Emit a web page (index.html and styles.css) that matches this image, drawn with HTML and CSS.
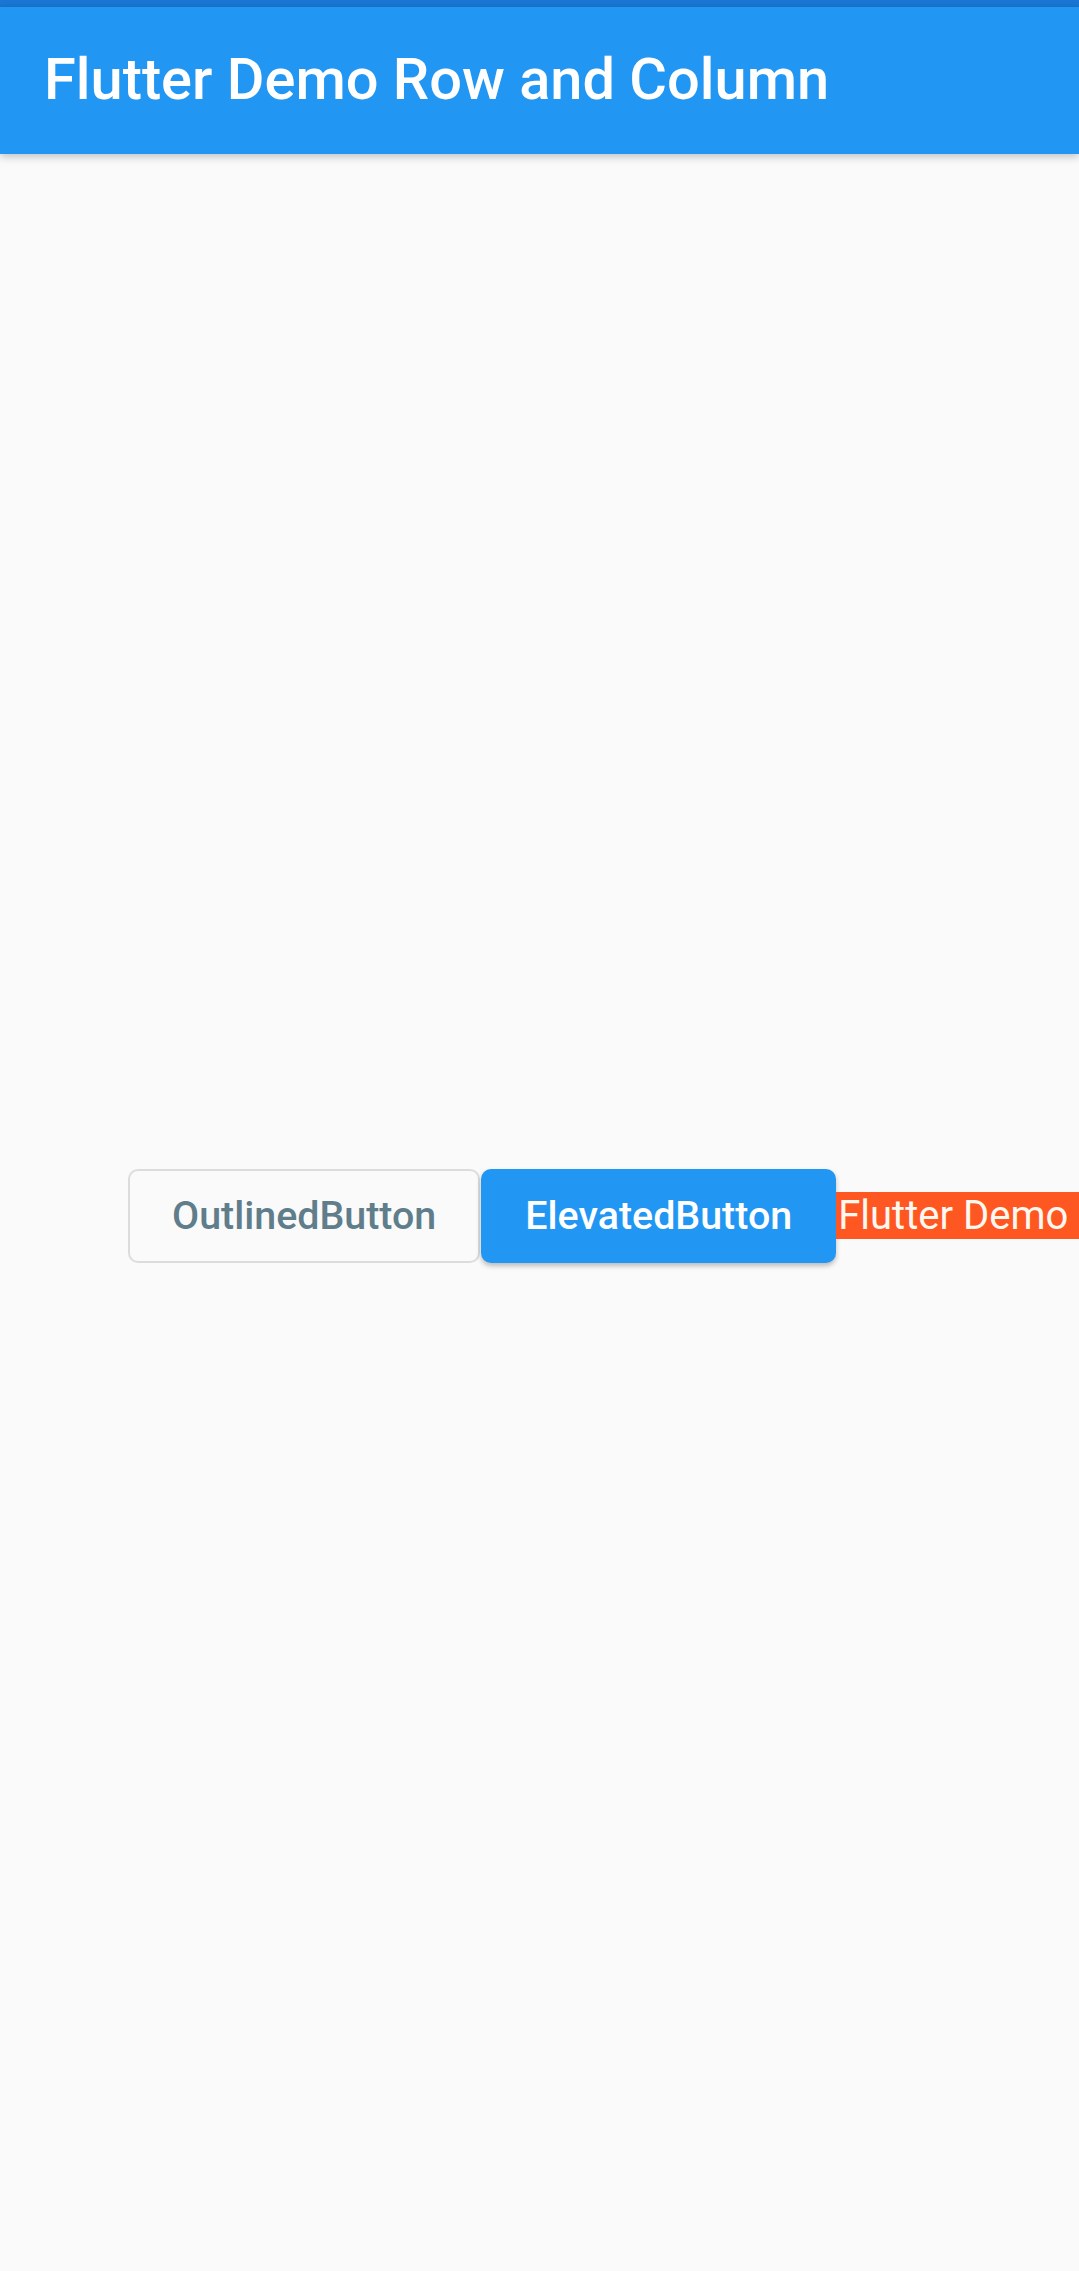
FILE: index.html
```html
<!DOCTYPE html>
<html lang="en">
<head>
  <meta charset="UTF-8">
  <meta name="viewport" content="width=device-width, initial-scale=1.0">
  <title>Flutter Demo Row and Column</title>
  <link rel="stylesheet" href="styles.css">
</head>
<body>
  <div class="status-bar"></div>
  <header class="app-bar">
    <h1>Flutter Demo Row and Column</h1>
  </header>

  <main class="content">
    <div class="row">
      <button class="btn btn-outlined">OutlinedButton</button>
      <button class="btn btn-elevated">ElevatedButton</button>
      <span class="tag">Flutter Demo</span>
    </div>
  </main>
</body>
</html>
```

FILE: styles.css
```css
html, body {
  height: 100%;
}
body {
  margin: 0;
  font-family: Roboto, "Noto Sans", sans-serif;
  background: #fafafa;
  display: flex;
  flex-direction: column;
  overflow: hidden;
}
.status-bar {
  height: 7px;
  background: #1976d2;
}
.app-bar {
  height: 147px;
  background: #2196f3;
  color: white;
  display: flex;
  align-items: center;
  padding: 0 44px;
  box-shadow: 0 3px 8px rgba(0,0,0,0.22);
  position: relative;
  z-index: 2;
}
.app-bar h1 {
  margin: 0;
  font-size: 57.75px;
  font-weight: 500;
  letter-spacing: 0;
  padding-bottom: 4px;
}
.content {
  flex: 1;
  display: flex;
  align-items: center;
  overflow: hidden;
  padding-top: 6px;
}
.row {
  display: flex;
  align-items: center;
  margin-left: 128px;
  white-space: nowrap;
}
.btn {
  flex-shrink: 0;
  height: 94px;
  padding: 0 42px;
  font-family: Roboto, sans-serif;
  font-size: 39.4px;
  font-weight: 500;
  border-radius: 10px;
  cursor: pointer;
}
.btn-outlined {
  background: transparent;
  color: #607d8b;
  border: 2px solid #dcdcdc;
}
.btn-elevated {
  margin-left: 1px;
  padding: 0 44px;
  background: #2196f3;
  color: white;
  border: none;
  box-shadow: 0 3px 5px rgba(0,0,0,0.25);
}
.tag {
  flex-shrink: 0;
  background: #ff5722;
  color: #fff8f0;
  font-size: 40px;
  line-height: 47px;
  padding: 0 12px 0 2px;
}
```
